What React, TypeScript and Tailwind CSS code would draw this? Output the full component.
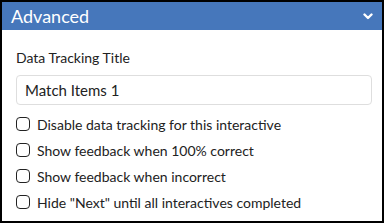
import React from 'react'

const options = [
  'Disable data tracking for this interactive',
  'Show feedback when 100% correct',
  'Show feedback when incorrect',
  'Hide "Next" until all interactives completed',
]

export default function App() {
  return (
    <div className="w-[384px] h-[223px] border-2 border-black bg-white font-['Lato',sans-serif] text-[#222]">
      <div className="h-[28px] bg-[#4677bb] flex items-center justify-between pl-[9px] pr-[9px]">
        <span className="text-white text-[18px] leading-none">Advanced</span>
        <svg width="10" height="7" viewBox="0 0 10 7" className="mt-[1px]">
          <path d="M1.5 1.5 L5 5 L8.5 1.5" stroke="white" strokeWidth="2.4" fill="none" strokeLinecap="round" strokeLinejoin="round" />
        </svg>
      </div>
      <div className="pl-[14px] pr-[10px] pt-[20px]">
        <div className="text-[14px] leading-[16px]">Data Tracking Title</div>
        <div className="mt-[9px] h-[30px] border border-[#dedede] rounded-[4px] flex items-center px-[8px] text-[15px]">
          Match Items 1
        </div>
        <div className="mt-[6px] flex flex-col">
          {options.map((o) => (
            <label key={o} className="h-[26px] flex items-center gap-[7px] text-[14px]">
              <span className="w-[14px] h-[14px] border-[1.5px] border-[#222] rounded-[4px] bg-white" />
              {o}
            </label>
          ))}
        </div>
      </div>
    </div>
  )
}
